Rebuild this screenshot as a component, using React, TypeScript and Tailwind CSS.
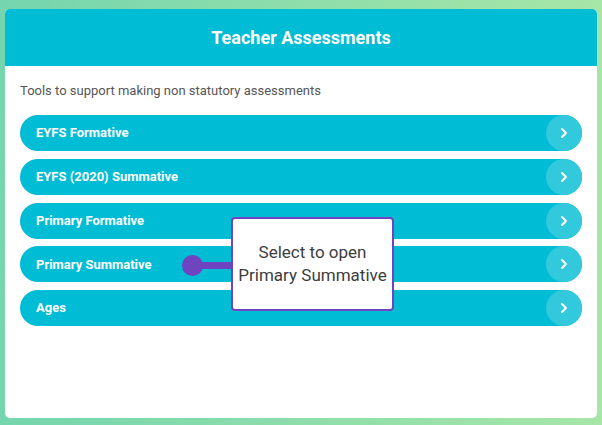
const items = ["EYFS Formative", "EYFS (2020) Summative", "Primary Formative", "Primary Summative", "Ages"];

const Chevron = () => (
  <svg width="10" height="12" viewBox="0 0 10 12" fill="none">
    <path d="M3 2l4 4-4 4" stroke="white" strokeWidth="2" strokeLinecap="round" strokeLinejoin="round" />
  </svg>
);

export default function App() {
  return (
    <div
      className="w-[602px] h-[425px] bg-gradient-to-r from-[#74d5ae] to-[#a6e6a7] pt-[9px] pl-[5px] pr-[5px] pb-[7px]"
      style={{ fontFamily: "Roboto, 'Noto Sans', sans-serif" }}
    >
      <div className="h-full bg-white rounded-[5px] overflow-hidden flex flex-col">
        {/* Header */}
        <div className="h-[57px] bg-[#00bcd4] flex items-center justify-center">
          <h1 className="text-white text-[18px] font-bold">Teacher Assessments</h1>
        </div>

        <div className="px-[15px]">
          <p className="text-[13px] text-[#555] mt-[16px] leading-[18px]">Tools to support making non statutory assessments</p>

          {/* Rows */}
          <div className="relative mt-[15px] flex flex-col gap-[7.75px]">
            {items.map((label) => (
              <div key={label} className="h-[36px] rounded-full bg-[#00bcd4] flex items-center justify-between">
                <span className="pl-[16px] text-white text-[13px] font-bold">{label}</span>
                <span className="w-[36px] h-[36px] rounded-full bg-[#33c9dd] flex items-center justify-center">
                  <Chevron />
                </span>
              </div>
            ))}

            {/* Tooltip */}
            <div className="absolute left-[162px] top-[140px] flex items-center">
              <div className="w-[21px] h-[21px] rounded-full bg-[#7043c0]" />
              <div className="w-[30px] h-[7px] -ml-[1px] bg-[#7043c0]" />
            </div>
            <div className="absolute left-[211px] top-[102px] w-[163px] h-[94px] bg-white border-2 border-[#7043c0] rounded-[4px] flex items-center justify-center text-center">
              <p className="text-[17px] leading-[23px] text-[#3d3d3d]">
                Select to open
                <br />
                Primary Summative
              </p>
            </div>
          </div>
        </div>
      </div>
    </div>
  );
}
